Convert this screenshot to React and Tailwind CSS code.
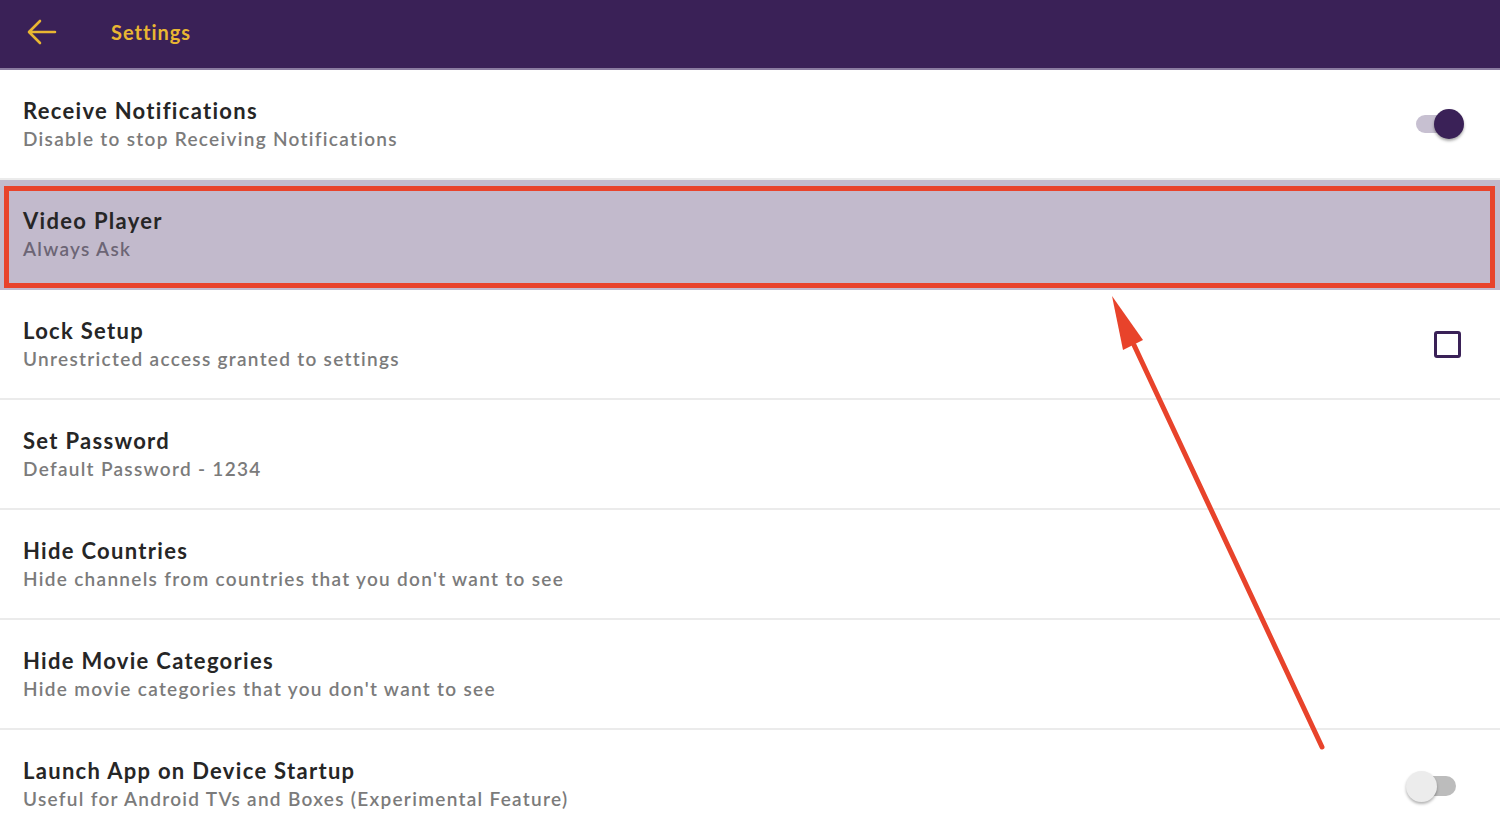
import React from 'react';

const rows = [
  { title: 'Receive Notifications', sub: 'Disable to stop Receiving Notifications', control: 'toggleOn' },
  { title: 'Video Player', sub: 'Always Ask', highlighted: true },
  { title: 'Lock Setup', sub: 'Unrestricted access granted to settings', control: 'checkbox' },
  { title: 'Set Password', sub: 'Default Password -  1234' },
  { title: 'Hide Countries', sub: "Hide channels from countries that you don't want to see" },
  { title: 'Hide Movie Categories', sub: "Hide movie categories that you don't want to see" },
  { title: 'Launch App on Device Startup', sub: 'Useful for Android TVs and Boxes (Experimental Feature)', control: 'toggleOff' },
];

const ToggleOn = () => (
  <div className="relative w-[52px] h-[32px] flex items-center">
    <div className="ml-[2px] w-[40px] h-[18px] rounded-full bg-[#c7c0d1]" />
    <div className="absolute right-[2px] top-[1px] w-[30px] h-[30px] rounded-full bg-[#3a2157] shadow-[0_2px_3px_rgba(0,0,0,0.35)]" />
  </div>
);

const ToggleOff = () => (
  <div className="relative w-[52px] h-[32px] flex items-center">
    <div className="ml-[14px] w-[36px] h-[20px] rounded-full bg-[#bcbcbc]" />
    <div className="absolute left-[0px] top-[1px] w-[31px] h-[31px] rounded-full bg-[#ececec] shadow-[0_2px_3px_rgba(0,0,0,0.3)]" />
  </div>
);

const Checkbox = () => (
  <div className="w-[27px] h-[27px] border-[3px] border-[#3a2157] rounded-[3px] bg-white" />
);

const SettingRow = ({ row }) => (
  <div
    className={`h-[110px] flex items-center justify-between pl-[23px] pr-[34px] border-b-2 ${
      row.highlighted ? 'bg-[#c2bacc] border-[#c2bacc]' : 'bg-white border-[#ebebeb]'
    }`}
  >
    <div className="flex flex-col">
      <span className="text-[22px] leading-[29px] font-bold text-[#262626] tracking-[1.3px]">{row.title}</span>
      <span
        className={`text-[19px] leading-[27px] font-semibold tracking-[1.3px] ${
          row.highlighted ? 'text-[#6c6575]' : 'text-[#7b7b7b]'
        }`}
      >
        {row.sub}
      </span>
    </div>
    {row.control === 'toggleOn' && <ToggleOn />}
    {row.control === 'checkbox' && <div className="mr-[5px]"><Checkbox /></div>}
    {row.control === 'toggleOff' && <div className="mr-[8px] mt-[4px]"><ToggleOff /></div>}
  </div>
);

export default function App() {
  return (
    <div className="relative w-[1500px] h-[824px] overflow-hidden bg-white" style={{ fontFamily: 'Lato, "Noto Sans", sans-serif' }}>
      {/* Header */}
      <div className="h-[70px] bg-[#3a2157] border-b-2 border-[#8a7ca0] flex items-center">
        <svg className="ml-[27px] -mt-[4px]" width="30" height="26" viewBox="0 0 30 26" fill="none">
          <path d="M28 13H3M13 2L2 13l11 11" stroke="#e9b632" strokeWidth="2.6" strokeLinecap="round" strokeLinejoin="round" />
        </svg>
        <span className="ml-[54px] -mt-[4px] text-[20px] font-bold text-[#e9b632] tracking-[1px]">Settings</span>
      </div>

      <div className="flex flex-col">
        {rows.map((r) => (
          <SettingRow key={r.title} row={r} />
        ))}
      </div>

      {/* Annotation overlay */}
      <svg className="absolute inset-0 pointer-events-none" width="1500" height="824" viewBox="0 0 1500 824">
        <rect x="6.5" y="188.5" width="1486" height="97" fill="none" stroke="#e8432b" strokeWidth="5" />
        <line x1="1322" y1="747" x2="1134" y2="345" stroke="#e8432b" strokeWidth="5" strokeLinecap="round" />
        <polygon points="1112,296 1143,340 1123,350" fill="#e8432b" />
      </svg>
    </div>
  );
}
